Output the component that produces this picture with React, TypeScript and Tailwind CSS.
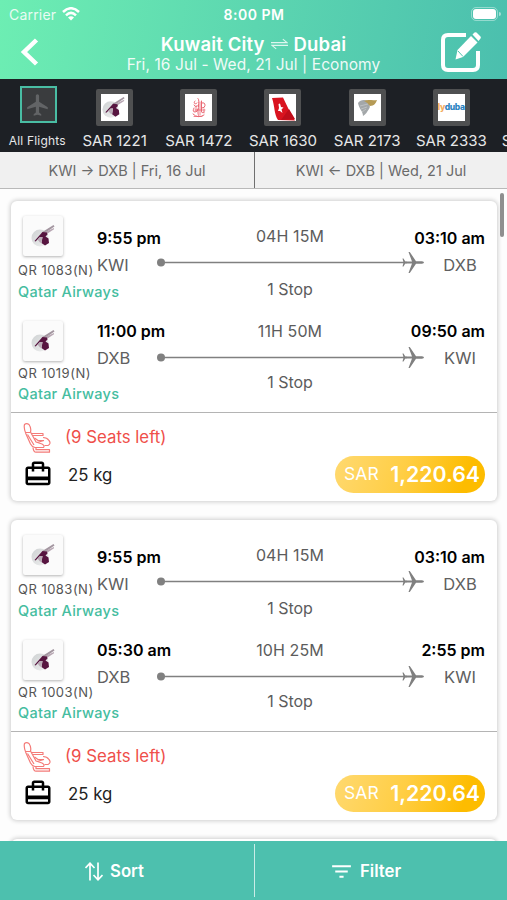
import React from 'react';
import clsx from 'clsx';
import { MdCardTravel, MdFilterList, MdFlight } from 'react-icons/md';

type Leg = {
  flight: string;
  departTime: string;
  from: string;
  arriveTime: string;
  to: string;
  duration: string;
};

const airlines = [
  { price: 'SAR 1221', logo: <QatarLogo viewBox="7 6 28 28" className="w-[27px] h-[27px]" /> },
  { price: 'SAR 1472', logo: <CalligraphyLogo /> },
  { price: 'SAR 1630', logo: <TailLogo /> },
  { price: 'SAR 2173', logo: <FalconLogo /> },
  { price: 'SAR 2333', logo: <DubaiLogo /> },
  { price: 'SAR 2410', logo: null },
];

const outbound: Leg = {
  flight: 'QR 1083(N)',
  departTime: '9:55 pm',
  from: 'KWI',
  arriveTime: '03:10 am',
  to: 'DXB',
  duration: '04H 15M',
};

const flights: Leg[][] = [
  [
    outbound,
    { flight: 'QR 1019(N)', departTime: '11:00 pm', from: 'DXB', arriveTime: '09:50 am', to: 'KWI', duration: '11H 50M' },
  ],
  [
    outbound,
    { flight: 'QR 1003(N)', departTime: '05:30 am', from: 'DXB', arriveTime: '2:55 pm', to: 'KWI', duration: '10H 25M' },
  ],
];

function QatarLogo({ className, viewBox = '0 0 40 40' }: { className?: string; viewBox?: string }) {
  return (
    <svg viewBox={viewBox} className={className}>
      <defs>
        <linearGradient id="ball" x1="0" y1="0" x2="1" y2="1">
          <stop offset="0" stopColor="#cfd2d3" />
          <stop offset="1" stopColor="#eff0f0" />
        </linearGradient>
      </defs>
      <circle cx="17" cy="22" r="8.500" fill="url(#ball)" />
      <path d="M18.500 16.500L30.500 9L31.500 10.500L22 17Z" fill="#a396a0" />
      <path d="M21 16.500L31 12L31 13.200L23 18.500Z" fill="#b7a6b2" />
      <path d="M11.500 25L19.500 16L24 16.500L24.500 18.500L22.500 20.500L25.500 22.500L26 27L22 29.500L18.500 27L19.500 21L17 21L12.500 25.500Z" fill="#571540" />
      <path d="M19.500 21L17 21L14.500 23.500L17 26.500L18.500 27Z" fill="#b9abb6" />
    </svg>
  );
}

function CalligraphyLogo() {
  return (
    <svg viewBox="0 0 27 27" className="w-[27px] h-[27px]" fill="none" stroke="#ea6671" strokeWidth="1" strokeLinecap="round">
      <path d="M13 4.500C14.500 6 13.500 8 13.500 12S12 20 14 22M10 7C8 9 10 11 12 9M9 11Q10 14 12.500 12M16.500 7V17Q16.500 20 19 18M9 14Q7 18 10 18Q13 18 13 15M8 20Q13 25 19 21M17 9Q20 8 20 11.500Q20 14 17 14" />
      <path d="M15 8V21M11 12V17M19 15V19M10 16H20M9 22.500H17" strokeWidth="0.800" />
    </svg>
  );
}

function TailLogo() {
  return (
    <svg viewBox="0 0 27 27" className="w-[27px] h-[27px]">
      <path d="M3 4L14 3.500L20 16L26 26.500L9 26C5 20 6 13 3 4Z" fill="#d9131f" />
      <path d="M20 15L26 25L12 26Z" fill="#bf0d1a" />
      <path d="M9.500 10L11 9.500L12 13L14.500 13.500L12.500 15.500L13.500 19L11 17L9 17L10 14Z" fill="#fff" />
    </svg>
  );
}

function FalconLogo() {
  return (
    <svg viewBox="0 0 27 27" className="w-[27px] h-[27px]">
      <path d="M4 9C6 6 10 5 14 7C15 10 17 12 15 15C13 18 12 20 9 22C9 17 5 15 4 9Z" fill="#a3a7a9" />
      <path d="M10 7C14 5 18 7 23 6C22 9 20 12 16 12C14 10 13 8 10 7Z" fill="#b59a55" />
      <path d="M6 12L14 10M7 15L13 13M8 18L12 15" stroke="#c9cccd" strokeWidth="0.700" />
    </svg>
  );
}

function DubaiLogo() {
  return (
    <span className="flex text-[8.500px] leading-none font-extrabold tracking-[-0.400px] text-[#2b83c0]">
      <span className="text-[#f3ac5c]">ly</span>duba
    </span>
  );
}

function StatusBar() {
  return (
    <div className="grid h-7 grid-cols-3 items-center pl-[9px] pr-[6px] text-white">
      <div className="flex items-center gap-[6px]">
        <span className="text-[14px] tracking-[0.2px] opacity-85">Carrier</span>
        <svg viewBox="0 0 18 14" className="h-[14px] w-[18px]" fill="none" stroke="currentColor" strokeWidth="2.500">
          <path d="M1 5Q9 -2.500 17 5" />
          <path d="M4 8.300Q9 3.500 14 8.300" />
          <path d="M9 13.500L6 10.500Q9 8 12 10.500Z" fill="currentColor" stroke="none" />
        </svg>
      </div>
      <span className="pr-[2px] text-center text-[14px] font-semibold tracking-[0.5px]">8:00 PM</span>
      <div className="flex items-center justify-end gap-px">
        <div className="rounded-[5px] border border-white/40 p-px">
          <div className="h-[10px] w-[23px] rounded-[3px] bg-white" />
        </div>
        <div className="h-1 w-[2px] rounded-r bg-white/50" />
      </div>
    </div>
  );
}

function Header() {
  return (
    <header className="h-[79px] bg-[linear-gradient(100deg,#6deeb3_0%,#5cd6b0_50%,#4bbfae_100%)] text-white">
      <StatusBar />
      <div className="flex h-[51px] items-center justify-between pl-5 pr-[25px]">
        <svg viewBox="0 0 20 28" className="mt-[-3px] h-7 w-5" fill="none" stroke="currentColor" strokeWidth="4.500">
          <path d="M16.500 2L4 14L16.500 26" />
        </svg>
        <div className="pl-[27px] text-center">
          <h1 className="flex items-center justify-center gap-[6px] text-[18.500px] leading-[22px] font-semibold tracking-[0.150px]">
            Kuwait City
            <svg viewBox="0 0 18 12" className="h-3 w-[17px] opacity-80" fill="none" stroke="currentColor" strokeWidth="1.200">
              <path d="M0 4.500H17L12.500 0.800M18 7.500H1L5.500 11.200" />
            </svg>
            Dubai
          </h1>
          <p className="text-[15.5px] leading-[19px] tracking-[0.080px] opacity-90">Fri, 16 Jul - Wed, 21 Jul | Economy</p>
        </div>
        <svg viewBox="0 0 42 42" className="mt-[-3px] h-[42px] w-[42px]">
          <path d="M26 4H8Q3 4 3 9V34Q3 39 8 39H33Q38 39 38 34V20" fill="none" stroke="currentColor" strokeWidth="4" />
          <path d="M31 5L37.500 11.500L23 26L15.500 28.500L17.500 19Z" fill="currentColor" />
          <path d="M32.500 3.500L34.500 1.500Q35.500 0.800 36.500 1.500L40.500 5.500Q41.300 6.500 40.500 7.500L38.500 10Z" fill="currentColor" />
          <path d="M18 20L23 25.500" stroke="#4fc5ae" strokeWidth="1" />
          <path d="M31.500 4.500L38 11" stroke="#4fc5ae" strokeWidth="1" />
        </svg>
      </div>
    </header>
  );
}

function AirlineStrip() {
  return (
    <div className="flex h-[73px] overflow-hidden bg-[#1d2025] text-[#e6e7e8]">
      <div className="flex w-[72.500px] shrink-0 flex-col items-center pt-[7px] pl-[4px]">
        <div className="flex h-[37px] w-[37px] items-center justify-center border-2 border-[#49bda4] bg-[#3a3c3e]">
          <MdFlight className="h-[26px] w-[26px] text-[#626466]" />
        </div>
        <span className="mt-[10px] mr-[2px] text-[12px] leading-4 tracking-[0.2px] whitespace-nowrap">All Flights</span>
      </div>
      {airlines.map((airline) => (
        <div key={airline.price} className="flex w-[84.2px] shrink-0 flex-col items-center pt-[10px]">
          <div className="flex h-[37px] w-[37px] items-center overflow-hidden rounded-[2px] border-5 border-[#4f5051] bg-white">
            {airline.logo}
          </div>
          <span className="mt-[5px] text-[15px] leading-5 whitespace-nowrap">{airline.price}</span>
        </div>
      ))}
    </div>
  );
}

function RouteTabs() {
  return (
    <div className="flex h-[37px] border-b border-[#b9b9b9] bg-[#f0f0f0] text-[14.500px] text-[#6a6a6a]">
      <div className="flex w-[255px] items-center justify-center border-r border-[#6f6f6f] pt-[2px]">KWI → DXB | Fri, 16 Jul</div>
      <div className="flex flex-1 items-center justify-center pt-[2px]">KWI ← DXB | Wed, 21 Jul</div>
    </div>
  );
}

function FlightLine() {
  return (
    <svg viewBox="0 0 268 22" className="h-[22px] w-[268px]" fill="#808080">
      <circle cx="4" cy="11.500" r="4" />
      <path d="M4 10.700H250V12.300H4Z" />
      <path d="M245.500 7.500H246.500L248.300 10.500H255L251.500 1H252.800L259 10.300H265Q267 10.500 267 11.500Q267 12.500 265 12.700H259L252.800 22H251.500L255 12.500H248.300L246.500 15.500H245.500L246.500 11.500Z" />
    </svg>
  );
}

function LegRow({ leg, inbound }: { leg: Leg; inbound: boolean }) {
  return (
    <div className={clsx('flex', inbound ? 'h-[106px]' : 'h-[105px]')}>
      <div className="w-[86px] shrink-0 pt-[15px] pl-[7px] whitespace-nowrap">
        <div className="ml-[5px] h-10 w-10 rounded-[2px] bg-[#fbfbfb] shadow-[0_1px_3px_rgba(0,0,0,0.3)]">
          <QatarLogo className="h-10 w-10" />
        </div>
        <p className={clsx('text-[13px] leading-4 tracking-[0.480px] text-[#555]', inbound ? 'mt-1' : 'mt-[6px]')}>{leg.flight}</p>
        <p className={clsx('text-[14.5px] leading-[18px] font-medium tracking-[0.250px] text-[#45bd9f]', inbound ? 'mt-1' : 'mt-[5px]')}>
          Qatar Airways
        </p>
      </div>
      <div className={clsx('w-[60px] shrink-0 whitespace-nowrap', inbound ? 'pt-[15px]' : 'pt-[27px]')}>
        <p className="text-[16px] leading-5 font-semibold text-black">{leg.departTime}</p>
        <p className="mt-[7px] text-[16.5px] leading-5 text-[#606060]">{leg.from}</p>
      </div>
      <div className={clsx('flex w-[268px] shrink-0 flex-col text-[16px] text-[#5c5c5c]', inbound ? 'pt-[15px]' : 'pt-[25px]')}>
        <p className="w-[266px] text-center leading-5 tracking-[0.100px]">{leg.duration}</p>
        <div className={inbound ? 'mt-[5px]' : 'mt-[5px]'}>
          <FlightLine />
        </div>
        <p className={clsx('w-[266px] text-center leading-5', inbound ? 'mt-[4px]' : 'mt-[6px]')}>1 Stop</p>
      </div>
      <div className={clsx('flex w-[72px] shrink-0 flex-col items-end whitespace-nowrap', inbound ? 'pt-[15px]' : 'pt-[27px]')}>
        <p className="pr-[12px] text-[16px] leading-5 font-semibold text-black">{leg.arriveTime}</p>
        <p className="mt-[7px] w-[74px] text-center text-[16.5px] leading-5 text-[#606060]">{leg.to}</p>
      </div>
    </div>
  );
}

function SeatIcon() {
  return (
    <svg viewBox="0 0 28 30" className="h-[30px] w-7" fill="none" stroke="#f47b78" strokeWidth="1.200" strokeLinejoin="round">
      <path d="M1.500 1.500Q3.500 -0.200 6 1.500Q8.500 5 7.500 9L13 19L19 21Q22 22.500 20.500 24.500H12Q9 24 7.500 21L3 11Q0.500 5 1.500 1.500Z" />
      <path d="M3 9.500H7.500M8 10.500H20V12.500H9.500M4.500 11.500L11 22M11.500 15L15 17.500H21M14 19.500L21 17.500M20 14.500Q24 14.500 26 17.500Q28.500 20.500 25 22.500H21.500" />
      <path d="M10 24.500Q10.500 29.200 13 29.200H26.500V26.700H13V24.500" />
    </svg>
  );
}

function FlightCard({ legs }: { legs: Leg[] }) {
  return (
    <div className="h-[300px] shrink-0 rounded-[6px] bg-white shadow-[0_0_4px_1px_rgba(0,0,0,0.19)]">
      {legs.map((leg, index) => (
        <LegRow key={index} leg={leg} inbound={index === 1} />
      ))}
      <div className="flex justify-between border-t-[1.500px] border-[#b4b4b4] pl-3 pr-3">
        <div>
          <div className="flex h-[44px] items-center gap-[14px] pt-[6px]">
            <SeatIcon />
            <span className="text-[16.800px] text-[#ef4f4a]">(9 Seats left)</span>
          </div>
          <div className="mt-px flex h-8 items-center gap-[15px]">
            <MdCardTravel className="h-[30px] w-[30px] text-black" />
            <span className="pt-[3px] text-[16.800px] text-[#222]">25 kg</span>
          </div>
        </div>
        <div className="mt-[43px] flex h-[37px] w-[150px] items-center justify-between rounded-full bg-[linear-gradient(110deg,#ffd970_0%,#ffce45_45%,#fdbc00_85%)] pl-[9px] pr-[5px] text-white">
          <span className="text-[17.5px] tracking-[0.100px]">SAR</span>
          <span className="text-[21.300px] font-semibold">1,220.64</span>
        </div>
      </div>
    </div>
  );
}

function BottomBar() {
  return (
    <footer className="flex h-[59px] bg-[#4dc0ae] text-[16.800px] font-semibold text-white">
      <div className="my-[3px] flex w-[255px] items-center justify-center gap-[7px] border-r-[1.500px] border-white/70 pr-[25px] pt-[2px]">
        <svg viewBox="0 0 18 19" className="h-[19px] w-[18px]" fill="none" stroke="currentColor" strokeWidth="1.700">
          <path d="M5 18.500V1.500M0.500 6L5 1.200L9.500 6M13 0.500V17.500M8.500 13L13 17.800L17.500 13" />
        </svg>
        Sort
      </div>
      <div className="flex flex-1 items-center justify-center gap-[6px] pr-8 pt-[2px]">
        <MdFilterList className="h-[25px] w-[25px]" />
        Filter
      </div>
    </footer>
  );
}

export default function App() {
  return (
    <div className="flex h-[900px] w-[507px] flex-col overflow-hidden bg-[#fdfdfd] font-['Inter',sans-serif]">
      <Header />
      <AirlineStrip />
      <RouteTabs />
      <main className="relative flex-1 overflow-hidden">
        <div className="flex flex-col gap-[19px] pt-3 pr-[10px] pl-[11px]">
          {flights.map((legs, index) => (
            <FlightCard key={index} legs={legs} />
          ))}
          <div className="h-10 rounded-[6px] bg-white shadow-[0_0_4px_1px_rgba(0,0,0,0.19)]" />
        </div>
        <div className="absolute top-[4px] right-[3px] h-[44px] w-1 rounded-full bg-[#8f8f8f]" />
      </main>
      <BottomBar />
    </div>
  );
}
